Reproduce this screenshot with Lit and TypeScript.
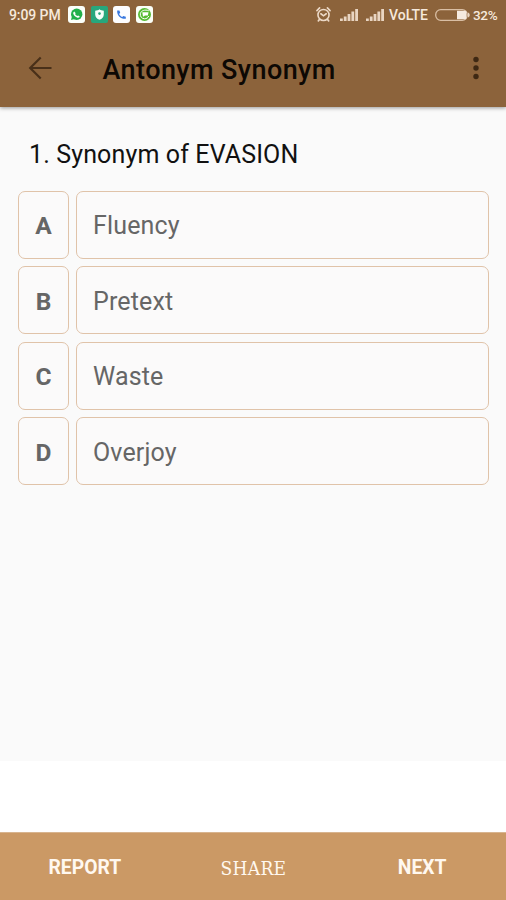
import { LitElement, html, css } from "lit";
import { customElement, property } from "lit/decorators.js";

@customElement("status-bar")
class StatusBar extends LitElement {
  static styles = css`
    :host {
      display: flex;
      align-items: center;
      box-sizing: border-box;
      height: 29px;
      padding: 0 8px 0 9px;
      color: #f6e9dc;
      font: 500 14px/30px Roboto, sans-serif;
      white-space: nowrap;
    }
    svg { display: block; flex: none; }
    .time { width: 59px; letter-spacing: -0.1px; }
    .apps { display: flex; gap: 5.5px; flex: 1; }
    .alarm { margin-right: 9px; }
    .signal { margin-right: 8px; }
    .signal.second { margin-right: 5px; }
    .volte { width: 46px; font-size: 14px; }
    .battery { margin-right: 3px; }
    .level { width: 25px; font-size: 13.5px; letter-spacing: -0.3px; }
  `;

  private signal(extra: string) {
    return html`<svg class="signal ${extra}" width="18" height="12" viewBox="0 0 18 12">
      <path d="M0 9.500h2.800V12H0zM3.800 7.500h2.800V12H3.800zM7.600 5h2.800v7H7.600zM11.400 2.500h2.800V12h-2.800zM15.200 0H18v12h-2.800z" fill="#e9d5c2" />
    </svg>`;
  }

  render() {
    return html`
      <span class="time">9:09 PM</span>
      <span class="apps">
        <svg width="17" height="17" viewBox="0 0 17 17">
          <rect width="17" height="17" rx="3" fill="#fbfffa" />
          <circle cx="8.7" cy="8.2" r="5.7" fill="#22b04b" />
          <path d="M3 14l1-4 3 3z" fill="#22b04b" />
          <path d="M6.3 5.4l1.4 1.8-.6.9c.6 1 1.2 1.5 2.1 2l1-.7 1.6 1.2c-.4 1.2-1.600 1.400-2.800.9-1.900-.8-3.100-2-3.700-3.700-.3-1 .1-2 1-2.400z" fill="#fff" />
        </svg>
        <svg width="17" height="17" viewBox="0 0 17 17">
          <rect width="17" height="17" rx="2" fill="#27a77c" />
          <path d="M8.500 3.200c1.200 1 2.600 1.400 4.300 1.500v3.700c0 2.600-1.700 4.300-4.300 5.400-2.600-1.100-4.300-2.800-4.300-5.400V4.700c1.700-.1 3.100-.5 4.300-1.500z" fill="#f6fffa" />
          <circle cx="8.500" cy="7.600" r="1.300" fill="#27a77c" />
        </svg>
        <svg width="17" height="17" viewBox="0 0 17 17">
          <rect width="17" height="17" rx="3" fill="#fdfdff" />
          <path d="M4.200 4.400h2.200l.8 2.400-1.100 1.100c.8 1.500 1.600 2.300 3.100 3.100l1.100-1.100 2.500.8v2.100C7.800 13.300 3.700 9.200 4.200 4.400z" fill="#3978df" />
        </svg>
        <svg width="17" height="17" viewBox="0 0 17 17">
          <rect width="17" height="17" rx="3" fill="#fbfff8" />
          <circle cx="8.500" cy="8.500" r="6.500" fill="#55bb32" />
          <path d="M12.800 4.800C9 3 4.800 4.800 4.300 7.800c-.3 2.600 1.500 4.900 4.200 5 2 0 3.700-1.200 4.200-2.800" fill="none" stroke="#fff" stroke-width="1" />
          <path d="M6.300 6.200h6.200l-.6 3.200H9L7 10.800z" fill="#fff" />
        </svg>
      </span>
      <svg class="alarm" width="15" height="15" viewBox="0 0 16 16" fill="none" stroke="#ecd9c7" stroke-width="1.700" stroke-linecap="round">
        <circle cx="8" cy="8.500" r="5.900" />
        <path d="M1 3.800L3.800 1M12.200 1L15 3.800M5.200 7.200L8 9.400l2.900-2.200M3.800 13.200L2.500 14.800M12.200 13.200l1.300 1.600" />
      </svg>
      ${this.signal("")}${this.signal("second")}
      <span class="volte">VoLTE</span>
      <svg class="battery" width="35" height="12" viewBox="0 0 35 12">
        <rect x=".7" y=".7" width="31.600" height="10.600" rx="5" fill="none" stroke="#d9bea4" stroke-width="1.300" />
        <path d="M22 1.700h8q1.500 0 1.500 1.500v5.600q0 1.500-1.500 1.500h-8z" fill="#f5eadf" />
        <path d="M33 3.500c2.300 1 2.300 4 0 5z" fill="#e9d5c2" />
      </svg>
      <span class="level">32%</span>
    `;
  }
}

@customElement("app-header")
class AppHeader extends LitElement {
  @property() heading = "";

  static styles = css`
    :host {
      display: flex;
      align-items: center;
      box-sizing: border-box;
      height: 78px;
      padding: 0 25px 0 28px;
    }
    svg { display: block; flex: none; }
    h1 {
      flex: 1;
      margin: 3px 0 0 50.500px;
      color: #0d0804;
      font: 500 27px/36px Roboto, sans-serif;
      letter-spacing: 0.42px;
      white-space: nowrap;
    }
  `;

  render() {
    return html`
      <svg width="24" height="24" viewBox="0 0 24 24" fill="none" stroke="#493019" stroke-width="2.200">
        <path d="M23.500 12H2.500M12.700 1.500L2.200 12l10.500 10.500" />
      </svg>
      <h1>${this.heading}</h1>
      <svg width="10" height="24" viewBox="0 0 10 24" fill="#3e2813">
        <circle cx="5" cy="3.500" r="2.700" />
        <circle cx="5" cy="12" r="2.700" />
        <circle cx="5" cy="20.500" r="2.700" />
      </svg>
    `;
  }
}

@customElement("answer-option")
class AnswerOption extends LitElement {
  @property() letter = "";
  @property() answer = "";

  static styles = css`
    :host {
      display: grid;
      grid-template-columns: 51px 1fr;
      gap: 7px;
      height: 68px;
      color: #666;
      font: 400 25px/66px Roboto, sans-serif;
    }
    .box {
      box-sizing: border-box;
      height: 68px;
      padding-top: 1.500px;
      border: 1px solid #e0c3a9;
      border-radius: 7px;
      background: #fbfafa;
    }
    .letter { font-weight: 700; font-size: 24.5px; text-align: center; }
    .answer { padding-left: 16px; letter-spacing: 0.15px; }
  `;

  render() {
    return html`
      <div class="box letter">${this.letter}</div>
      <div class="box answer">${this.answer}</div>
    `;
  }
}

@customElement("app-root")
class AppRoot extends LitElement {
  static styles = css`
    :host {
      display: flex;
      flex-direction: column;
      height: 900px;
      overflow: hidden;
      background: #fff;
      font-family: Roboto, sans-serif;
    }
    .top {
      position: relative;
      background: #8c633b;
      box-shadow: 0 1px 4px rgba(0, 0, 0, 0.4);
    }
    .quiz {
      box-sizing: border-box;
      height: 654px;
      padding: 32px 17px 0 18px;
      background: #fafafa;
    }
    .question {
      margin: 0 0 0 11px;
      height: 51.500px;
      color: #111;
      font: 400 25px/32px Roboto, sans-serif;
      letter-spacing: 0.13px;
      white-space: nowrap;
    }
    .options { display: grid; gap: 7.500px; }
    .actions {
      display: grid;
      grid-template-columns: repeat(3, 1fr);
      box-sizing: border-box;
      height: 68px;
      margin-top: auto;
      border-top: 1px solid #d8b48f;
      background: #cb9965;
    }
    button {
      margin: 0;
      padding: 3px 0 0 1px;
      border: 0;
      background: none;
      color: #fff8f0;
      font: 700 19.300px/24px Roboto, sans-serif;
    }
    .share {
      font: 400 19px/24px "DejaVu Serif Condensed", "DejaVu Serif", serif;
      font-stretch: condensed;
      letter-spacing: 0.3px;
    }
  `;

  private options = ["Fluency", "Pretext", "Waste", "Overjoy"];

  render() {
    return html`
      <header class="top">
        <status-bar></status-bar>
        <app-header heading="Antonym Synonym"></app-header>
      </header>
      <main class="quiz">
        <p class="question">1. Synonym of EVASION</p>
        <div class="options">
          ${this.options.map(
            (text, i) => html`<answer-option letter=${"ABCD"[i]} answer=${text}></answer-option>`
          )}
        </div>
      </main>
      <footer class="actions">
        <button>REPORT</button>
        <button class="share">SHARE</button>
        <button>NEXT</button>
      </footer>
    `;
  }
}
